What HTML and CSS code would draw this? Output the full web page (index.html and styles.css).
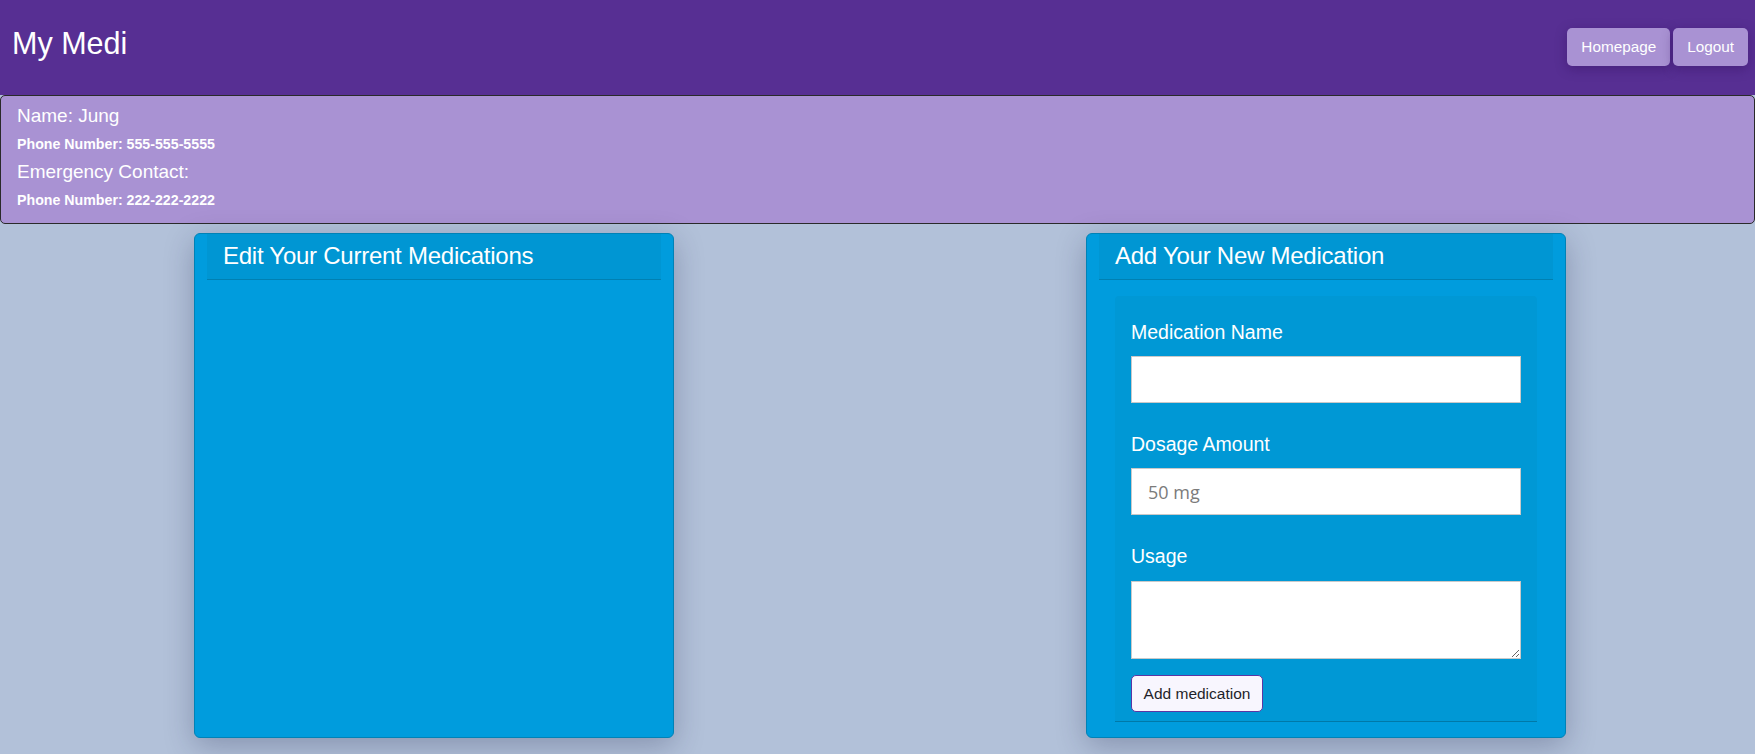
FILE: index.html
```html
<!DOCTYPE html>
<html lang="en">
<head>
<meta charset="utf-8">
<title>My Medi</title>
<link rel="stylesheet" href="styles.css">
</head>
<body>
<header class="topbar">
  <h1 class="brand">My Medi</h1>
  <nav class="nav">
    <button class="nav-btn">Homepage</button>
    <button class="nav-btn">Logout</button>
  </nav>
</header>
<section class="profile">
  <p class="profile-big">Name: Jung</p>
  <p class="profile-small">Phone Number: 555-555-5555</p>
  <p class="profile-big">Emergency Contact:</p>
  <p class="profile-small">Phone Number: 222-222-2222</p>
</section>
<main class="cards">
  <section class="card">
    <h2 class="card-title">Edit Your Current Medications</h2>
  </section>
  <section class="card">
    <h2 class="card-title">Add Your New Medication</h2>
    <form class="med-form">
      <label class="field-label" for="mname">Medication Name</label>
      <input class="field-input" id="mname" type="text">
      <label class="field-label gap" for="mdose">Dosage Amount</label>
      <input class="field-input" id="mdose" type="text" placeholder="50 mg">
      <label class="field-label gap-sm" for="musage">Usage</label>
      <textarea class="field-area" id="musage"></textarea>
      <button type="button" class="add-btn">Add medication</button>
    </form>
  </section>
</main>
</body>
</html>
```
FILE: styles.css
```css
* { box-sizing: border-box; }
html, body { margin: 0; padding: 0; }
body {
  background: #b2c1d9;
  font-family: "Liberation Sans", Arial, sans-serif;
  color: #fff;
  min-height: 754px;
}
.topbar {
  height: 95px;
  background: #572f93;
  display: flex;
  justify-content: space-between;
  align-items: flex-start;
  padding: 25px 7px 0 12px;
}
.brand {
  margin: 0;
  font-weight: normal;
  font-size: 30.5px;
  line-height: 36px;
  color: #fff;
}
.nav {
  display: flex;
  gap: 3px;
  margin-top: 3px;
}
.nav-btn {
  height: 38px;
  border: none;
  border-radius: 5px;
  background: #a992d3;
  color: #fff;
  font-family: "Liberation Sans", Arial, sans-serif;
  font-size: 15.3px;
  padding: 0 14px;
  box-shadow: 0 3px 12px rgba(40, 10, 80, 0.35);
}
.profile {
  background: #a992d3;
  border: 1px solid #2a2a2a;
  border-radius: 5px;
  padding: 6px 16px 9px;
}
.profile p { margin: 0; line-height: 28px; }
.profile-big { font-size: 19px; }
.profile-small { font-size: 14.2px; font-weight: bold; }
.cards {
  display: flex;
  justify-content: space-between;
  padding: 9px 189px 0 194px;
}
.card {
  width: 480px;
  height: 505px;
  background: #009cdd;
  border: 1px solid #0082b6;
  border-radius: 6px;
  padding: 0 12px;
  box-shadow: 0 8px 30px rgba(20, 30, 70, 0.28);
}
.card-title {
  margin: 0;
  height: 46px;
  background: #0096d3;
  border-bottom: 1px solid #0080b2;
  font-weight: normal;
  font-size: 24px;
  letter-spacing: -0.25px;
  line-height: 44px;
  padding-left: 16px;
  color: #fff;
}
.med-form {
  margin: 16px 16px 0;
  background: #0098d5;
  border-radius: 4px 4px 0 0;
  border-bottom: 1px solid #0079a8;
  padding: 25px 16px 9px;
  display: flex;
  flex-direction: column;
  align-items: flex-start;
}
.field-label {
  display: block;
  font-size: 19.5px;
  line-height: 22px;
  margin-bottom: 13px;
}
.field-label.gap { margin-top: 30px; }
.field-label.gap-sm { margin-top: 30px; margin-bottom: 14px; }
.field-input {
  width: 100%;
  height: 47px;
  border: 1px solid #c9c9c9;
  background: #fff;
  padding: 0 16px;
  font-family: "Open Sans", sans-serif;
  font-size: 18px;
  color: #333;
}
.field-input::placeholder { color: #7b7b7b; }
.field-area {
  width: 100%;
  height: 78px;
  border: 1px solid #c9c9c9;
  background: #fff;
  resize: vertical;
  display: block;
}
.add-btn {
  margin-top: 16px;
  height: 37px;
  width: 132px;
  border: 1px solid #5b36a3;
  border-radius: 5px;
  background: #f8f6fe;
  color: #1f1f2a;
  font-family: "Liberation Sans", Arial, sans-serif;
  font-size: 15.5px;
  padding: 0;
}
```
